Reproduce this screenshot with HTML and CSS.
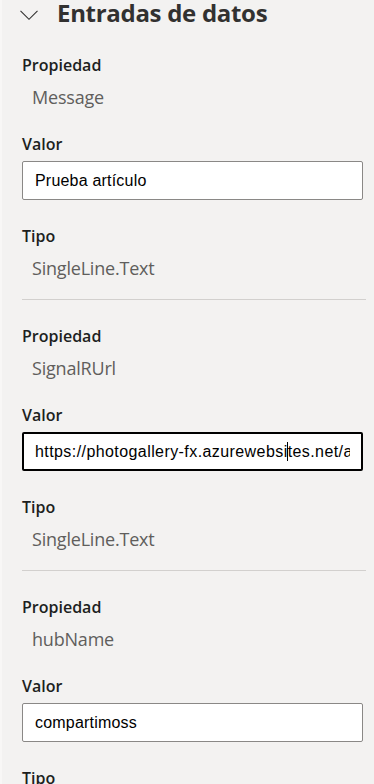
FILE: index.html
```html
<!DOCTYPE html>
<html lang="es">
<head>
<meta charset="utf-8">
<title>Entradas de datos</title>
<link rel="stylesheet" href="styles.css">
</head>
<body>
<div class="panel">
  <div class="header">
    <svg class="chevron" width="18" height="11" viewBox="0 0 18 11" aria-hidden="true"><path d="M0.5 0.8 L9 9.3 L17.5 0.8" fill="none" stroke="#323130" stroke-width="1.1"/></svg>
    <h2 class="title">Entradas de datos</h2>
  </div>

  <div class="section">
    <div class="label">Propiedad</div>
    <div class="value">Message</div>
    <div class="label label-valor">Valor</div>
    <div class="field" role="textbox"><span class="field-text">Prueba artículo</span></div>
    <div class="label label-tipo">Tipo</div>
    <div class="value">SingleLine.Text</div>
  </div>

  <div class="section">
    <div class="label">Propiedad</div>
    <div class="value">SignalRUrl</div>
    <div class="label label-valor">Valor</div>
    <div class="field field-focus" role="textbox"><span class="field-text field-url">https://photogallery-fx.azurewebsi<span class="caret"></span>tes.net/api/signalr</span></div>
    <div class="label label-tipo">Tipo</div>
    <div class="value">SingleLine.Text</div>
  </div>

  <div class="section">
    <div class="label">Propiedad</div>
    <div class="value">hubName</div>
    <div class="label label-valor">Valor</div>
    <div class="field" role="textbox"><span class="field-text">compartimoss</span></div>
    <div class="label label-tipo">Tipo</div>
    <div class="value">SingleLine.Text</div>
  </div>
</div>
</body>
</html>
```

FILE: styles.css
```css
html, body {
  margin: 0;
  padding: 0;
  background: #f3f2f1;
}

body {
  font-family: "Open Sans", "Noto Sans", sans-serif;
  color: #323130;
  overflow: hidden;
}

.panel {
  border-left: 2px solid #f8f7f6;
  padding: 1px 8px 0 20px;
  min-height: 784px;
  box-sizing: border-box;
}

.header {
  display: flex;
  align-items: center;
  margin-left: -2px;
  height: 24px;
}

.chevron {
  display: block;
  margin-top: 4px;
  margin-right: 19px;
}

.title {
  margin: 0;
  font-size: 24px;
  line-height: 24px;
  font-weight: 700;
  color: #323130;
  letter-spacing: -0.3px;
}

.section {
  display: flex;
  flex-direction: column;
  padding-top: 30px;
  padding-bottom: 19px;
  border-bottom: 1px solid #d2d0ce;
}

.section + .section {
  padding-top: 26px;
}

.label {
  font-size: 16px;
  line-height: 20px;
  font-weight: 600;
  color: #201f1e;
}

.value {
  margin-top: 10px;
  padding-left: 10px;
  font-size: 18px;
  line-height: 24px;
  color: #605e5c;
  letter-spacing: -0.2px;
}

.label-valor {
  margin-top: 25px;
}

.label-tipo {
  margin-top: 26px;
}

.field {
  display: flex;
  align-items: center;
  margin-top: 7px;
  width: 341px;
  height: 39px;
  box-sizing: border-box;
  border: 1px solid #8a8886;
  border-radius: 2px;
  background: #ffffff;
  padding: 0 12px;
  font-family: "Liberation Sans", Arial, sans-serif;
  font-size: 16px;
  color: #000000;
}

.field-text {
  display: block;
  flex: 1;
  min-width: 0;
  white-space: nowrap;
  overflow: hidden;
  line-height: 20px;
  letter-spacing: 0.2px;
}

.field-url {
  letter-spacing: 0.42px;
}

.field-focus {
  border: 2px solid #000000;
  padding: 0 11px;
}

.caret {
  display: inline-block;
  width: 1px;
  height: 19px;
  background: #000000;
  vertical-align: -4px;
  margin: 0 -0.5px;
}
```
